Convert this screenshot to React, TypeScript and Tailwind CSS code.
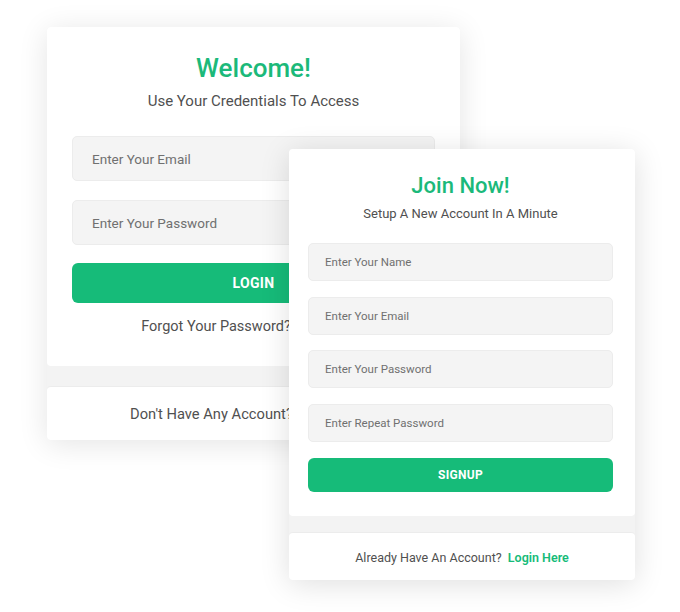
const font = { fontFamily: 'Roboto, "Open Sans", Arial, sans-serif' };

function Field({ placeholder, big }: { placeholder: string; big?: boolean }) {
  return (
    <input
      type="text"
      placeholder={placeholder}
      className={
        big
          ? 'block h-[45px] w-full rounded-[5px] border border-[#ececec] bg-[#f4f4f4] px-[19px] text-[13.5px] text-[#555] placeholder:text-[#707070] outline-none'
          : 'block h-[38px] w-full rounded-[5px] border border-[#ececec] bg-[#f4f4f4] px-[16px] text-[11.5px] text-[#555] placeholder:text-[#707070] outline-none'
      }
    />
  );
}

export default function App() {
  return (
    <div className="relative h-[612px] w-[680px] overflow-hidden bg-white" style={font}>
      {/* login card */}
      <div className="ml-[47px] mt-[27px] w-[413px] rounded-[4px] bg-[#f3f3f3] shadow-[0_4px_30px_rgba(0,0,0,0.11)]">
        <div className="rounded-[4px] bg-white px-[25px] pb-[28px] pt-[25px] text-center">
          <h1 className="text-[26px] font-medium leading-[32px] text-[#1bb97a]">Welcome!</h1>
          <p className="mt-[6px] text-[15px] leading-[22px] text-[#505050]">Use Your Credentials To Access</p>
          <div className="mt-[24px] space-y-[19px]">
            <Field big placeholder="Enter Your Email" />
            <Field big placeholder="Enter Your Password" />
          </div>
          <button className="mt-[18px] h-[40px] w-full rounded-[6px] bg-[#16bb79] text-[14px] font-bold tracking-wide text-white">
            LOGIN
          </button>
          <p className="mt-[13px] text-[14.5px] leading-[22px] text-[#505050]">
            Forgot Your Password? <a className="font-medium text-[#16bb79]">Reset Here</a>
          </p>
        </div>
        <div className="mt-[20px] flex h-[54px] items-center justify-center rounded-[4px] border-t border-[#ececec] bg-white pt-px text-[14.7px] text-[#505050]">
          Don't Have Any Account?&nbsp;<a className="font-medium text-[#16bb79]">Signup Here</a>
        </div>
      </div>

      {/* signup card, lies over the login card */}
      <div className="absolute left-[289px] top-[149px] w-[346px] rounded-[4px] bg-[#f3f3f3] shadow-[0_4px_30px_rgba(0,0,0,0.13)]">
        <div className="rounded-[4px] bg-white pb-[24px] pl-[19px] pr-[22px] pt-[23px] text-center">
          <h2 className="text-[22px] font-medium leading-[28px] text-[#1bb97a]">Join Now!</h2>
          <p className="mt-[4px] text-[13px] leading-[20px] text-[#505050]">Setup A New Account In A Minute</p>
          <div className="mt-[19px] flex flex-col gap-[16px]">
            <Field placeholder="Enter Your Name" />
            <Field placeholder="Enter Your Email" />
            <div className="-mt-px">
              <Field placeholder="Enter Your Password" />
            </div>
            <Field placeholder="Enter Repeat Password" />
          </div>
          <button className="mt-[16px] h-[34px] w-full rounded-[6px] bg-[#16bb79] text-[12px] font-bold tracking-wide text-white">
            SIGNUP
          </button>
        </div>
        <div className="mt-[16px] flex h-[48px] items-center justify-center rounded-[4px] border-t border-[#ececec] bg-white pt-[3px] text-[12.5px] text-[#505050]">
          Already Have An Account?&nbsp;&nbsp;<a className="font-semibold text-[#16bb79]">Login Here</a>
        </div>
      </div>
    </div>
  );
}
